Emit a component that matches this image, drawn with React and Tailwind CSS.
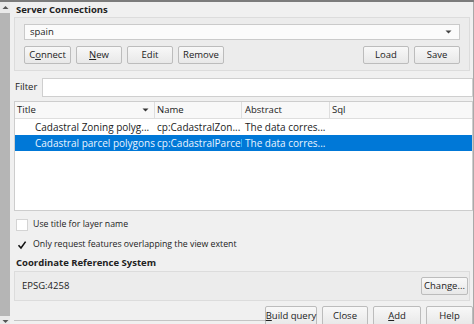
import React from "react";

const font = { fontFamily: '"Open Sans", "Noto Sans", sans-serif' };

const Btn = ({ children, className = "" }) => (
  <button
    className={`flex h-[18px] items-center justify-center whitespace-nowrap rounded-[2px] border border-[#bcbcbc] bg-gradient-to-b from-[#f8f8f8] to-[#e8e8e8] text-[9.5px] leading-none text-[#222] ${className}`}
  >
    {children}
  </button>
);

const Check = ({ checked, label }) => (
  <div className="flex h-[14px] items-center gap-[5px]">
    <div
      className={`flex h-[12px] w-[12px] items-center justify-center ${
        checked ? "" : "border border-[#d4d4d4] bg-white"
      }`}
    >
      {checked && (
        <svg width="10" height="10" viewBox="0 0 10 10">
          <path d="M1.5 5.2 L4 8 L8.6 1.6" fill="none" stroke="#111" strokeWidth="1.6" />
        </svg>
      )}
    </div>
    <span className="text-[8.75px] text-[#222]">{label}</span>
  </div>
);

const rows = [
  { title: "Cadastral Zoning polyg...", name: "cp:CadastralZon...", abstract: "The data corres...", selected: false },
  { title: "Cadastral parcel polygons", name: "cp:CadastralParcel", abstract: "The data corres...", selected: true },
];

export default function App() {
  return (
    <div
      style={font}
      className="flex h-[324px] w-[474px] flex-col overflow-hidden border-t-2 border-[#7c7c7c] bg-[#f0f0f0]"
    >
      <div className="flex flex-1">
        {/* left scrollbar */}
        <div className="flex w-[10px] flex-col items-center bg-[#e9e9e9]">
          <svg width="7" height="5" viewBox="0 0 7 5" className="mt-[3px]">
            <path d="M0.5 4 L3.5 1 L6.5 4 Z" fill="#555" />
          </svg>
          <div className="mt-[3px] mb-[3px] w-full flex-1 bg-[#b5b5b5]" />
          <svg width="7" height="5" viewBox="0 0 7 5" className="mb-[2px]">
            <path d="M0.5 1 L3.5 4 L6.5 1 Z" fill="#555" />
          </svg>
        </div>

        <div className="flex flex-1 flex-col pl-[4px] pr-[3px]">
          <div className="h-[15px] pl-[2px] text-[9.5px] font-bold leading-[15px] text-[#222]">
            Server Connections
          </div>
          <div className="flex flex-col gap-[6px] border border-[#dcdcdc] bg-[#ececec] px-[9px] pt-[6px] pb-[6px]">
            <div className="flex h-[16px] items-center justify-between border border-[#cacaca] bg-[#fbfbfb] pl-[5px] pr-[7px]">
              <span className="text-[9.5px] text-[#222]">spain</span>
              <svg width="7" height="4" viewBox="0 0 7 4">
                <path d="M0.5 0.5 L3.5 3.5 L6.5 0.5 Z" fill="#444" />
              </svg>
            </div>
            <div className="flex h-[18px] gap-[5px]">
              <Btn className="w-[47px]">
                C<span className="underline">o</span>nnect
              </Btn>
              <Btn className="w-[46px]">
                <span className="underline">N</span>ew
              </Btn>
              <Btn className="w-[46px]">Edit</Btn>
              <Btn className="w-[46px]">Remove</Btn>
              <div className="flex-1" />
              <Btn className="w-[46px]">Load</Btn>
              <Btn className="w-[46px]">Save</Btn>
            </div>
          </div>

          <div className="mt-[6px] flex h-[20px] items-center gap-[5px] pl-[1px]">
            <span className="text-[9.5px] text-[#222]">Filter</span>
            <div className="-mr-[3px] h-[19px] flex-1 border border-[#cfcfcf] bg-white" />
          </div>

          <div className="mt-[4px] -mr-[3px] flex h-[110px] flex-col border border-[#cdcdcd] bg-white">
            <div className="flex h-[17px] border-b border-[#dedede] bg-[#f8f8f8] text-[9.5px] text-[#222]">
              <div className="flex w-[140px] items-center justify-between border-r border-[#dedede] pl-[2px] pr-[5px]">
                <span>Title</span>
                <svg width="7" height="4" viewBox="0 0 7 4">
                  <path d="M0.5 0.5 L3.5 3.5 L6.5 0.5 Z" fill="#333" />
                </svg>
              </div>
              <div className="flex w-[87px] items-center border-r border-[#dedede] pl-[2px]">Name</div>
              <div className="flex w-[88px] items-center border-r border-[#dedede] pl-[3px]">Abstract</div>
              <div className="flex items-center pl-[2px]">Sql</div>
            </div>
            {rows.map((r) => (
              <div
                key={r.name}
                className={`flex h-[16px] items-center whitespace-nowrap text-[10px] ${
                  r.selected ? "bg-[#0078d7] text-[#eaf4ff]" : "text-[#222]"
                }`}
              >
                <div className="w-[140px] overflow-hidden pl-[20px]">{r.title}</div>
                <div className="w-[87px] overflow-hidden pl-[2px]">{r.name}</div>
                <div className="w-[88px] overflow-hidden pl-[3px]">{r.abstract}</div>
                <div className="flex-1" />
              </div>
            ))}
          </div>

          <div className="mt-[7px] flex flex-col gap-[6px] pl-[2px]">
            <Check checked={false} label="Use title for layer name" />
            <Check checked label="Only request features overlapping the view extent" />
          </div>

          <div className="mt-[4px] h-[13px] pl-[2px] text-[9.5px] font-bold leading-[13px] text-[#222]">
            Coordinate Reference System
          </div>
          <div className="mt-[2px] flex h-[30px] items-center justify-between border border-[#dcdcdc] bg-[#ececec] pl-[7px] pr-[1px]">
            <span className="text-[9.5px] text-[#222]">EPSG:4258</span>
            <Btn className="w-[47px]">Change...</Btn>
          </div>

          <div className="mt-[5px] flex flex-1 items-start">
            <div className="mt-[14px] flex-1 border-b border-[#c4c4c4]" />
            <div className="flex gap-[5px]">
              <Btn className="h-[20px] w-[52px]">
                <span className="underline">B</span>uild query
              </Btn>
              <Btn className="h-[20px] w-[46px]">Close</Btn>
              <Btn className="h-[20px] w-[48px]">
                <span className="underline">A</span>dd
              </Btn>
              <Btn className="-mr-[3px] h-[20px] w-[47px]">Help</Btn>
            </div>
          </div>
        </div>
        <div className="w-[1px] bg-[#a9a9a9]" />
      </div>
    </div>
  );
}
